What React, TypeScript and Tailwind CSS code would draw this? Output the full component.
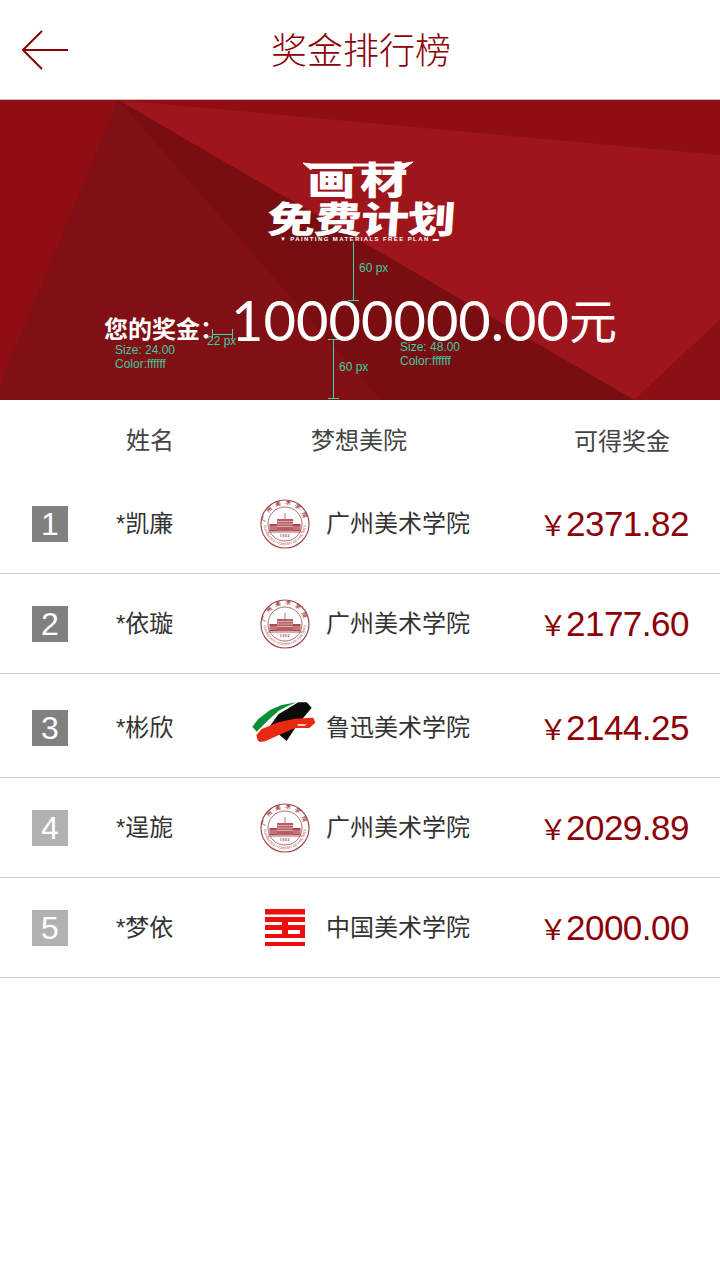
const SANS = "font-['Liberation_Sans','Noto_Sans_CJK_SC',sans-serif]";

const rows = [
  { rank: 1, name: "*凯廉", school: "广州美术学院", logo: "gz", amount: "2371.82", tall: false },
  { rank: 2, name: "*依璇", school: "广州美术学院", logo: "gz", amount: "2177.60", tall: false },
  { rank: 3, name: "*彬欣", school: "鲁迅美术学院", logo: "lx", amount: "2144.25", tall: true },
  { rank: 4, name: "*逞旎", school: "广州美术学院", logo: "gz", amount: "2029.89", tall: false },
  { rank: 5, name: "*梦依", school: "中国美术学院", logo: "ca", amount: "2000.00", tall: false },
];

function GzLogo() {
  return (
    <svg width="50" height="50" viewBox="0 0 50 50">
      <defs>
        <path id="sealTop" d="M5.500 25a19.500 19.500 0 0 1 39 0" fill="none" />
        <path id="sealBottom" d="M3.800 25a21.200 21.200 0 0 0 42.400 0" fill="none" />
      </defs>
      <circle cx="25" cy="25" r="24" fill="none" stroke="#a2474c" strokeWidth="1.2" />
      <circle cx="25" cy="25" r="17" fill="none" stroke="#a2474c" strokeWidth="0.8" />
      <text fill="#a2474c" fontSize="5.500" fontFamily="'Noto Sans CJK SC'" fontWeight="700">
        <textPath href="#sealTop" startOffset="50%" textAnchor="middle" letterSpacing="4">广州美术学院</textPath>
      </text>
      <text fill="#a2474c" fontSize="3.400" fontFamily="'Liberation Sans'">
        <textPath href="#sealBottom" startOffset="50%" textAnchor="middle">GUANGZHOU ACADEMY OF FINE ARTS</textPath>
      </text>
      <rect x="9.500" y="25" width="31" height="7" fill="#a84a4f" />
      <rect x="17" y="20" width="16" height="12" fill="#b85d62" />
      <rect x="24.600" y="14" width="0.8" height="6" fill="#a84a4f" />
      <path d="M17 22.500h16M17 25h16M17 27.500h16M10 28h7M33 28h7M10 30h7M33 30h7" stroke="#f6e4e4" strokeWidth="0.6" />
      <path d="M8 33h34" stroke="#a2474c" strokeWidth="0.9" />
      <text x="25" y="37.500" fill="#a2474c" fontSize="3.600" fontWeight="700" fontFamily="'Liberation Sans'" textAnchor="middle" letterSpacing="0.6">1953</text>
    </svg>
  );
}

function LxLogo() {
  return (
    <svg className="shrink-0" width="80" height="65" viewBox="0 0 240 195">
      <path d="M22 95 40 72 75 45l35-15 45-8-25 10-30 16-30 27-35 35z" fill="#0a8f37" />
      <path d="M70 100 100 58l60-36h25l15 16-28 34-22 28-25 38-17-14-13-12z" fill="#0a0a0a" />
      <path d="M38 136 34 120 50 102l50-20 50-11 55-3 6 15-18 16h-43l-50 22-40 18-15 2z" fill="#ea2a10" />
      <path d="M158 87h28l-6 6-22 0z" fill="#f9c4b4" />
    </svg>
  );
}

function CaLogo() {
  return (
    <svg width="40" height="37" viewBox="0 0 40 37" fill="#ee0c0c">
      <path d="M0 0h40v5.500H0zM0 8h40v5H0zM0 16h40v5H0zM0 25h40v4H0zM0 33h40v4H0z" />
      <path d="M17 13h6v12h-6zM35 21h5v4h-5z" />
    </svg>
  );
}

function Row({ row }: { row: (typeof rows)[number] }) {
  const badge = row.rank < 4 ? "bg-[#808080]" : "bg-[#b2b2b2]";
  return (
    <div className={`flex items-center border-b border-[#cccccc] ${row.tall ? "h-[104px] pt-1" : "h-[100px]"}`}>
      <div className="w-[116px] pl-8">
        <div className={`flex h-9 w-9 items-center justify-center text-[32px] leading-none text-white ${badge}`}>
          {row.rank}
        </div>
      </div>
      <div className="w-[134px] text-[24px] leading-none text-[#333333]">{row.name}</div>
      <div className="flex w-[70px] justify-center">
        {row.logo === "gz" && <GzLogo />}
        {row.logo === "lx" && <LxLogo />}
        {row.logo === "ca" && <CaLogo />}
      </div>
      <div className="ml-1.5 text-[24px] leading-none text-[#333333]">{row.school}</div>
      <div className="ml-auto flex items-baseline pr-[31px] text-[#8c0007]">
        <span className="mr-[-1px] font-['Noto_Sans_CJK_SC',sans-serif] text-[28px] leading-none">￥</span>
        <span className="text-[35px] leading-none tracking-[-0.5px]">{row.amount}</span>
      </div>
    </div>
  );
}

export default function App() {
  return (
    <div className={`flex h-[1280px] w-[720px] flex-col overflow-hidden bg-white ${SANS}`}>
      <header className="relative flex h-[100px] items-center justify-center border-b border-[#d9b8b8]">
        <svg className="absolute left-[22px] top-[30px]" width="46" height="40" viewBox="0 0 46 40" fill="none" stroke="#8c0007" strokeWidth="2">
          <path d="M20 1 1 20l19 19M1 20h45" />
        </svg>
        <h1 className="ml-[2px] pt-1 text-[36px] font-light leading-none text-[#8c0007]">奖金排行榜</h1>
      </header>

      <section className="relative h-[300px] bg-[#8f0e14]">
        <svg className="absolute inset-0" width="720" height="300" viewBox="0 0 720 300">
          <path d="M118 0H720V55z" fill="#8f0e13" />
          <path d="M118 0 720 55V220L634 300z" fill="#9e161c" />
          <path d="M118 0 634 300H381z" fill="#780e12" />
          <path d="M118 0 381 300H0V285z" fill="#801014" />
          <path d="M720 220V300H634z" fill="#8b0f15" />
        </svg>

        {/* logo */}
        <div className="absolute left-[267px] top-[60px] flex h-[84px] w-[186px] flex-col items-center text-white">
          <svg className="absolute left-[35px] top-[1px]" width="112" height="12" viewBox="0 0 112 12">
            <path d="M1 2 9 9 9 5H98L100 9 111 1 98 3H9z" fill="#fff" stroke="#fff" />
          </svg>
          <div className="mt-[2px] text-[38px] font-black leading-[38px] tracking-[4px] [transform:scaleX(1.25)]">画材</div>
          <div className="-mt-[3px] origin-bottom text-[46px] font-black leading-[38px] tracking-[-1px] [transform:skewX(-4deg)_scale(1.04,0.8)]">免费计划</div>
          <div className="mt-[1px] whitespace-nowrap text-[6px] font-bold leading-[6px] tracking-[1.4px]">▼ PAINTING MATERIALS FREE PLAN ▬</div>
        </div>

        <div className="absolute left-[104px] top-[188px] flex items-end whitespace-nowrap text-white">
          <span className="mb-[1px] w-[120px] text-[24px] font-bold leading-[34px]">您的奖金：</span>
          <span className="ml-[7px] font-['Lato','Noto_Sans_CJK_SC',sans-serif] text-[56px] font-normal leading-[56px]">10000000.00</span>
          <span className="font-['Noto_Sans_CJK_SC',sans-serif] text-[48px] leading-[60px]">元</span>
        </div>

        {/* spec annotations left on the mockup */}
        <div className="absolute left-[353px] top-[142px] h-[58px] w-px bg-[#36d6b0]" />
        <div className="absolute left-[348px] top-[200px] h-px w-[11px] bg-[#36d6b0]" />
        <span className="absolute left-[359px] top-[162px] text-[12px] leading-none text-[#3cc9a5]">60 px</span>

        <div className="absolute left-[333px] top-[239px] h-[60px] w-px bg-[#36d6b0]" />
        <div className="absolute left-[328px] top-[239px] h-px w-[11px] bg-[#36d6b0]" />
        <div className="absolute left-[328px] top-[298px] h-px w-[11px] bg-[#36d6b0]" />
        <span className="absolute left-[339px] top-[261px] text-[12px] leading-none text-[#3cc9a5]">60 px</span>

        <div className="absolute left-[212px] top-[234px] h-px w-[21px] bg-[#36d6b0]" />
        <div className="absolute left-[232px] top-[229px] h-[10px] w-px bg-[#36d6b0]" />
        <div className="absolute left-[212px] top-[229px] h-[10px] w-px bg-[#36d6b0]" />
        <span className="absolute left-[207px] top-[235px] text-[12px] leading-none text-[#3cc9a5]">22 px</span>

        <div className="absolute left-[115px] top-[243px] text-[12px] leading-[14px] text-[#3cc9a5]">
          <div>Size: 24.00</div>
          <div>Color:ffffff</div>
        </div>
        <div className="absolute left-[400px] top-[240px] text-[12px] leading-[14px] text-[#3cc9a5]">
          <div>Size: 48.00</div>
          <div>Color:ffffff</div>
        </div>
      </section>

      <div className="flex h-[74px] items-center pt-2 text-[24px] text-[#444444]">
        <span className="ml-[126px]">姓名</span>
        <span className="ml-[137px]">梦想美院</span>
        <span className="ml-auto mr-[50px] pt-0.5">可得奖金</span>
      </div>

      {rows.map((row) => (
        <Row key={row.rank} row={row} />
      ))}
    </div>
  );
}
